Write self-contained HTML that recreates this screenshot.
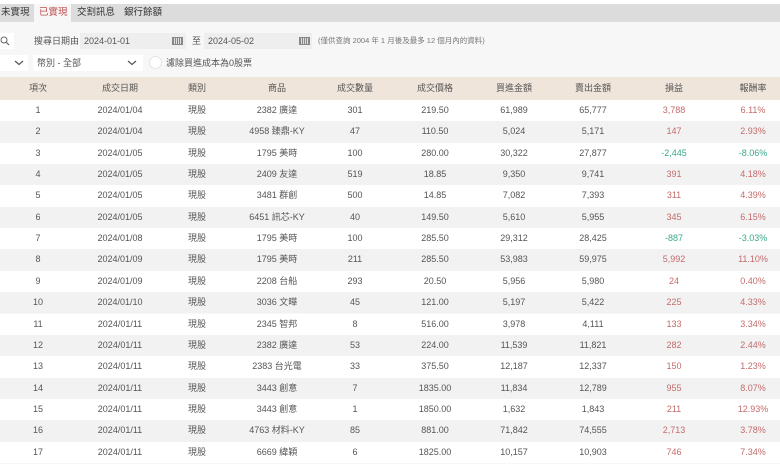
<!DOCTYPE html>
<html><head><meta charset="utf-8"><style>
*{margin:0;padding:0;box-sizing:border-box}
body{width:780px;height:464px;overflow:hidden;background:#f7f7f7;font-family:"Liberation Sans","Noto Sans CJK TC",sans-serif;font-size:9px;color:#555;position:relative}
.abs{position:absolute}
.tabbar{left:0;top:4px;width:780px;height:18px;background:#dcdcdc}
.tab{top:4px;height:18px;line-height:18px;font-size:9.5px;color:#333}
.inp{background:#eeeeee;height:16px;line-height:16px;font-size:9px;color:#555;padding-left:4px}
.row{left:0;width:780px;height:21.35px;line-height:21.35px}
.c{position:absolute;width:80px;text-align:center;top:0}
.hd{left:0;top:77px;width:780px;height:23px;line-height:23px;background:#efe5da;color:#555}
.r{color:#c46b6b}.g{color:#3aa88a}
</style></head><body>
<div class="abs" style="left:0;top:0;width:780px;height:4px;background:#fff"></div>
<div class="abs tabbar"></div>
<div class="abs" style="left:34px;top:4px;width:37px;height:20px;background:#f7f7f7"></div>
<div class="abs tab" style="left:1px">未實現</div>
<div class="abs tab" style="left:39px;color:#c0504d">已實現</div>
<div class="abs tab" style="left:77px">交割訊息</div>
<div class="abs tab" style="left:124px">銀行餘額</div>

<div class="abs" style="left:0;top:33px;width:14px;height:16px;background:#fff"></div>
<svg class="abs" style="left:0;top:36px" width="10" height="10"><circle cx="4" cy="4" r="3" fill="none" stroke="#666" stroke-width="1"/><line x1="6.2" y1="6.2" x2="9" y2="9" stroke="#666" stroke-width="1.2"/></svg>
<div class="abs" style="left:34px;top:33px;line-height:16px;color:#555">搜尋日期由</div>
<div class="abs inp" style="left:80px;top:33px;width:106px">2024-01-01</div>
<div class="abs" style="left:172px;top:37px;width:11px;height:8px;border:1px solid #888;background:repeating-linear-gradient(90deg,#888 0 1px,#ddd 1px 2px)"></div>
<div class="abs" style="left:192px;top:33px;line-height:16px">至</div>
<div class="abs inp" style="left:204px;top:33px;width:108px">2024-05-02</div>
<div class="abs" style="left:299px;top:37px;width:11px;height:8px;border:1px solid #888;background:repeating-linear-gradient(90deg,#888 0 1px,#ddd 1px 2px)"></div>
<div class="abs" style="left:318px;top:33px;line-height:16px;font-size:7.5px;color:#777">(僅供查詢 2004 年 1 月後及最多 12 個月內的資料)</div>

<div class="abs inp" style="left:0;top:55px;width:28px;background:#fff"></div>
<svg class="abs" style="left:14px;top:60px" width="10" height="6"><polyline points="1,1 5,4.5 9,1" fill="none" stroke="#555" stroke-width="1.2"/></svg>
<div class="abs inp" style="left:33px;top:55px;width:110px;background:#fff">幣別 - 全部</div>
<svg class="abs" style="left:127px;top:60px" width="10" height="6"><polyline points="1,1 5,4.5 9,1" fill="none" stroke="#555" stroke-width="1.2"/></svg>
<div class="abs" style="left:149px;top:56px;width:13px;height:13px;border-radius:50%;background:#fff;border:1px solid #e4e4e4"></div>
<div class="abs" style="left:166px;top:55px;line-height:16px;color:#555">濾除買進成本為0股票</div>

<div class="abs hd">
<div class="c" style="left:-2px">項次</div><div class="c" style="left:80px">成交日期</div><div class="c" style="left:157px">類別</div><div class="c" style="left:237px">商品</div><div class="c" style="left:315px">成交數量</div><div class="c" style="left:395px">成交價格</div><div class="c" style="left:474px">買進金額</div><div class="c" style="left:553px">賣出金額</div><div class="c" style="left:634px">損益</div><div class="c" style="left:713px">報酬率</div>
</div>
<div id="rows"></div>
<script>
var d=[["1","2024/01/04","2382 廣達","301","219.50","61,989","65,777","3,788","6.11%"],
["2","2024/01/04","4958 臻鼎-KY","47","110.50","5,024","5,171","147","2.93%"],
["3","2024/01/05","1795 美時","100","280.00","30,322","27,877","-2,445","-8.06%"],
["4","2024/01/05","2409 友達","519","18.85","9,350","9,741","391","4.18%"],
["5","2024/01/05","3481 群創","500","14.85","7,082","7,393","311","4.39%"],
["6","2024/01/05","6451 訊芯-KY","40","149.50","5,610","5,955","345","6.15%"],
["7","2024/01/08","1795 美時","100","285.50","29,312","28,425","-887","-3.03%"],
["8","2024/01/09","1795 美時","211","285.50","53,983","59,975","5,992","11.10%"],
["9","2024/01/09","2208 台船","293","20.50","5,956","5,980","24","0.40%"],
["10","2024/01/10","3036 文曄","45","121.00","5,197","5,422","225","4.33%"],
["11","2024/01/11","2345 智邦","8","516.00","3,978","4,111","133","3.34%"],
["12","2024/01/11","2382 廣達","53","224.00","11,539","11,821","282","2.44%"],
["13","2024/01/11","2383 台光電","33","375.50","12,187","12,337","150","1.23%"],
["14","2024/01/11","3443 創意","7","1835.00","11,834","12,789","955","8.07%"],
["15","2024/01/11","3443 創意","1","1850.00","1,632","1,843","211","12.93%"],
["16","2024/01/11","4763 材料-KY","85","881.00","71,842","74,555","2,713","3.78%"],
["17","2024/01/11","6669 緯穎","6","1825.00","10,157","10,903","746","7.34%"]];
var L=[-2,80,237,315,395,474,553,634,713],h="";
d.forEach(function(r,i){var cls=r[7][0]=="-"?"g":"r";
h+='<div class="abs row" style="top:'+(100+i*21.35)+'px;background:'+(i%2?'#f2f2f2':'#fff')+'">';
h+='<div class="c" style="left:-2px">'+r[0]+'</div><div class="c" style="left:80px">'+r[1]+'</div><div class="c" style="left:157px">現股</div>';
for(var k=2;k<9;k++){h+='<div class="c '+(k>=7?cls:'')+'" style="left:'+L[k]+'px">'+r[k]+'</div>';}
h+='</div>';});
document.getElementById('rows').innerHTML=h;
</script>
</body></html>
